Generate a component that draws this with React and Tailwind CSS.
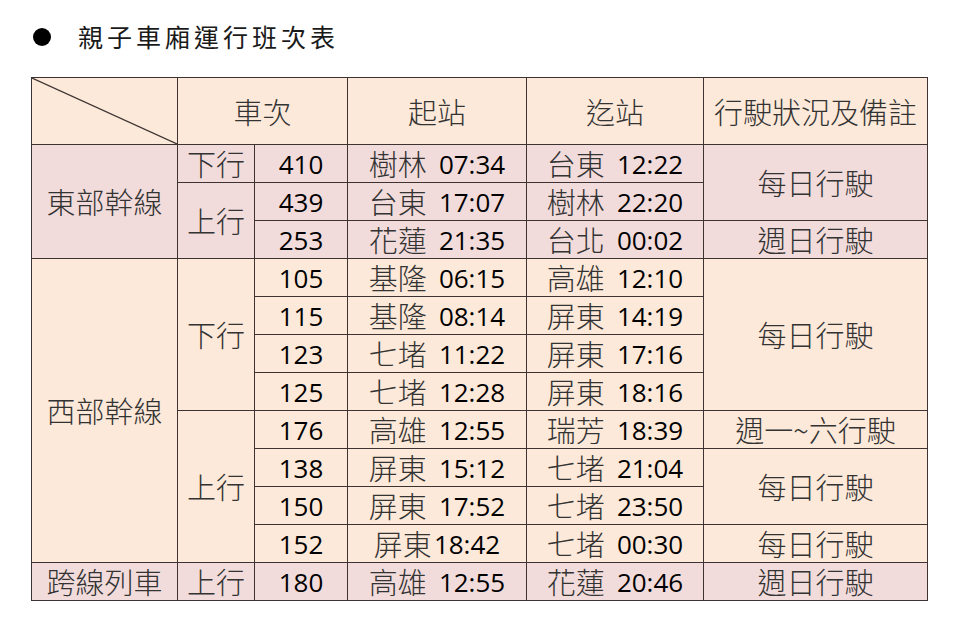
import React from "react";

/* ─── Fonts ─── */
const CJK = { fontFamily: '"Noto Sans CJK TC", "Noto Sans", sans-serif' };
const NUM = { fontFamily: '"Open Sans", "Liberation Sans", sans-serif' };

const PINK = "bg-[#f2dcdb]";
const PEACH = "bg-[#fde9d9]";

/* ─── Rows ─── */
const ROWS = [
    { line: "東部幹線", lineSpan: 3, dir: "下行", dirSpan: 1, no: "410", from: ["樹林", "07:34"], to: ["台東", "12:22"], note: "每日行駛", noteSpan: 2, bg: PINK },
    { dir: "上行", dirSpan: 2, no: "439", from: ["台東", "17:07"], to: ["樹林", "22:20"], bg: PINK },
    { no: "253", from: ["花蓮", "21:35"], to: ["台北", "00:02"], note: "週日行駛", noteSpan: 1, bg: PINK },
    { line: "西部幹線", lineSpan: 8, dir: "下行", dirSpan: 4, no: "105", from: ["基隆", "06:15"], to: ["高雄", "12:10"], note: "每日行駛", noteSpan: 4, bg: PEACH },
    { no: "115", from: ["基隆", "08:14"], to: ["屏東", "14:19"], bg: PEACH },
    { no: "123", from: ["七堵", "11:22"], to: ["屏東", "17:16"], bg: PEACH },
    { no: "125", from: ["七堵", "12:28"], to: ["屏東", "18:16"], bg: PEACH },
    { dir: "上行", dirSpan: 4, no: "176", from: ["高雄", "12:55"], to: ["瑞芳", "18:39"], note: "週一~六行駛", noteSpan: 1, bg: PEACH },
    { no: "138", from: ["屏東", "15:12"], to: ["七堵", "21:04"], note: "每日行駛", noteSpan: 2, bg: PEACH },
    { no: "150", from: ["屏東", "17:52"], to: ["七堵", "23:50"], bg: PEACH },
    { no: "152", from: ["屏東", "18:42"], to: ["七堵", "00:30"], note: "每日行駛", noteSpan: 1, bg: PEACH, tight: true },
    { line: "跨線列車", lineSpan: 1, dir: "上行", dirSpan: 1, no: "180", from: ["高雄", "12:55"], to: ["花蓮", "20:46"], note: "週日行駛", noteSpan: 1, bg: PINK },
];

const cell = "border border-[#3d3333] p-0 text-center align-middle leading-none";
const cjkText = "text-[29px] font-light text-[#333]";
const numText = "text-[26px] font-medium text-black";

const Station = ({ name, time, tight }) => (
    <div className={`flex items-center justify-center ${tight ? "gap-0.5" : "gap-3"}`}>
        <span style={CJK} className={cjkText}>{name}</span>
        <span style={NUM} className={numText}>{time}</span>
    </div>
);

export default function App() {
    return (
        <div className="w-[960px] h-[632px] bg-white relative">
            {/* Title */}
            <div className="flex items-center pt-[22px] pl-[33px] h-[52px]">
                <span className="w-[18px] h-[18px] rounded-full bg-black" />
                <h1 style={CJK} className="ml-[27px] text-[25px] tracking-[4px] text-[#1a1a1a]">
                    親子車廂運行班次表
                </h1>
            </div>

            {/* Table */}
            <table className="mt-[25px] ml-[31px] border-collapse table-fixed w-[896px]">
                <colgroup>
                    <col className="w-[146px]" />
                    <col className="w-[77px]" />
                    <col className="w-[93px]" />
                    <col className="w-[179px]" />
                    <col className="w-[177px]" />
                    <col className="w-[224px]" />
                </colgroup>
                <thead>
                    <tr className={`h-[67px] ${PEACH}`}>
                        <th className={`${cell} relative`}>
                            <svg className="absolute inset-0 w-full h-full" preserveAspectRatio="none" viewBox="0 0 100 100">
                                <line x1="0" y1="0" x2="100" y2="100" stroke="#3d3333" strokeWidth="1.2" vectorEffect="non-scaling-stroke" />
                            </svg>
                        </th>
                        <th colSpan={2} style={CJK} className={`${cell} ${cjkText}`}>車次</th>
                        <th style={CJK} className={`${cell} ${cjkText}`}>起站</th>
                        <th style={CJK} className={`${cell} ${cjkText}`}>迄站</th>
                        <th style={CJK} className={`${cell} ${cjkText} whitespace-nowrap`}>行駛狀況及備註</th>
                    </tr>
                </thead>
                <tbody>
                    {ROWS.map((r) => (
                        <tr key={r.no} className={`h-[38px] ${r.bg}`}>
                            {r.line && (
                                <td rowSpan={r.lineSpan} style={CJK} className={`${cell} ${cjkText}`}>
                                    {r.line}
                                </td>
                            )}
                            {r.dir && (
                                <td rowSpan={r.dirSpan} style={CJK} className={`${cell} ${cjkText}`}>
                                    {r.dir}
                                </td>
                            )}
                            <td style={NUM} className={`${cell} ${numText}`}>{r.no}</td>
                            <td className={cell}>
                                <Station name={r.from[0]} time={r.from[1]} tight={r.tight} />
                            </td>
                            <td className={cell}>
                                <Station name={r.to[0]} time={r.to[1]} />
                            </td>
                            {r.note && (
                                <td rowSpan={r.noteSpan} style={CJK} className={`${cell} ${cjkText}`}>
                                    {r.note}
                                </td>
                            )}
                        </tr>
                    ))}
                </tbody>
            </table>
        </div>
    );
}
